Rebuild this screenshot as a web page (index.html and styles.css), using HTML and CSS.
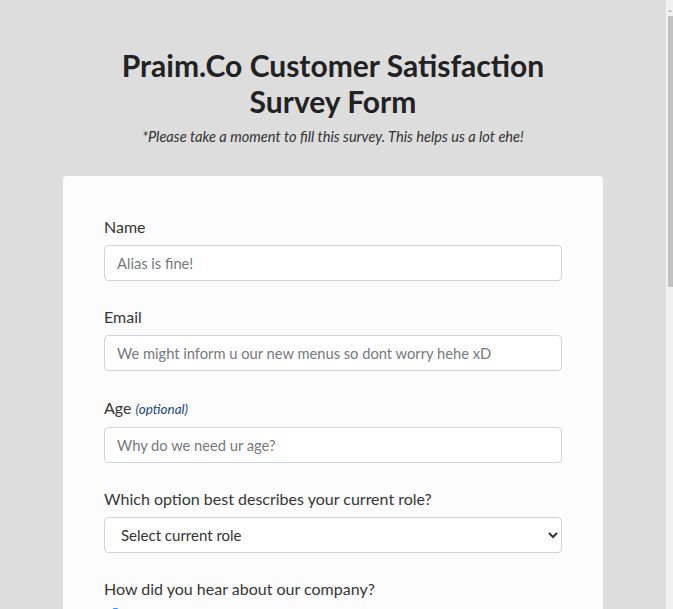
FILE: index.html
```html
<!DOCTYPE html>
<html lang="en">
<head>
<meta charset="utf-8">
<title>Praim.Co Customer Satisfaction Survey Form</title>
<link rel="stylesheet" href="styles.css">
</head>
<body>
<main class="page">
  <header class="header">
    <h1 class="title">Praim.Co Customer Satisfaction Survey Form</h1>
    <p class="subtitle">*Please take a moment to fill this survey. This helps us a lot ehe!</p>
  </header>
  <form class="card">
    <div class="group">
      <label class="label" for="name">Name</label>
      <input class="control" id="name" type="text" placeholder="Alias is fine!">
    </div>
    <div class="group">
      <label class="label" for="email">Email</label>
      <input class="control" id="email" type="email" placeholder="We might inform u our new menus so dont worry hehe xD">
    </div>
    <div class="group">
      <label class="label" for="age">Age <span class="optional">(optional)</span></label>
      <input class="control" id="age" type="number" placeholder="Why do we need ur age?">
    </div>
    <div class="group">
      <label class="label" for="role">Which option best describes your current role?</label>
      <select class="control select" id="role">
        <option>Select current role</option>
        <option>Student</option>
        <option>Full Time Job</option>
        <option>Full Time Learner</option>
        <option>Prefer not to say</option>
        <option>Other</option>
      </select>
    </div>
    <div class="group">
      <p class="label label-list">How did you hear about our company?</p>
      <label class="choice"><input type="radio" name="hear" checked> Friends</label>
      <label class="choice"><input type="radio" name="hear"> Social Media</label>
      <label class="choice"><input type="radio" name="hear"> Advertisement</label>
      <label class="choice"><input type="radio" name="hear"> Others</label>
    </div>
    <div class="group">
      <p class="label">Would you recommend our company to a friend?</p>
      <select class="control select">
        <option>Select an option</option>
        <option>Definitely</option>
        <option>Maybe</option>
        <option>Not sure</option>
      </select>
    </div>
    <div class="group">
      <p class="label label-list">What would you like us to improve? <span class="optional">(check all that apply)</span></p>
      <label class="choice"><input type="checkbox"> Menus</label>
      <label class="choice"><input type="checkbox"> Service</label>
      <label class="choice"><input type="checkbox"> Prices</label>
      <label class="choice"><input type="checkbox"> Ambience</label>
      <label class="choice"><input type="checkbox"> Cleanliness</label>
    </div>
    <div class="group">
      <label class="label" for="comments">Any comments or suggestions?</label>
      <textarea class="control area" id="comments" placeholder="Enter your comment here..."></textarea>
    </div>
    <div class="group">
      <button class="submit" type="submit">Submit</button>
    </div>
  </form>
</main>
<div class="scrollbar" aria-hidden="true">
  <span class="scroll-arrow"></span>
  <span class="scroll-thumb"></span>
</div>
</body>
</html>
```

FILE: styles.css
```css
html {
  background: #dddddd;
}
body {
  margin: 0;
  font-family: Lato, "Open Sans", sans-serif;
  color: #333333;
}
.page {
  display: flex;
  flex-direction: column;
  align-items: center;
  margin-right: 7px;
  padding: 47px 0 40px;
}
.scrollbar {
  position: fixed;
  top: 0;
  right: 0;
  width: 7px;
  height: 100vh;
  background: #f1f1f1;
  display: flex;
  flex-direction: column;
  align-items: flex-end;
}
.scroll-arrow {
  width: 0;
  height: 0;
  margin: 10px 1px 4px 0;
  border-left: 2px solid transparent;
  border-right: 2px solid transparent;
  border-bottom: 2px solid #a3a3a3;
}
.scroll-thumb {
  width: 5px;
  height: 271px;
  background: #c1c1c1;
}
.header {
  text-align: center;
  width: 460px;
}
.title {
  margin: 0;
  font-size: 30px;
  line-height: 36px;
  font-weight: 700;
  color: #222222;
}
.subtitle {
  margin: 9px 0 0;
  font-size: 14.6px;
  font-style: italic;
  color: #333333;
  white-space: nowrap;
}
.card {
  width: 540px;
  box-sizing: border-box;
  margin-top: 31px;
  padding: 39px 41px 30px;
  background: #fcfcfc;
  border-radius: 4px;
}
.group {
  display: flex;
  flex-direction: column;
  margin-bottom: 24.25px;
}
.label {
  display: block;
  margin: 0 0 6px;
  font-size: 16px;
  line-height: 24px;
  color: #363636;
}
.label-list {
  margin-bottom: 3px;
}
.optional {
  font-size: 13.5px;
  font-style: italic;
  color: #22457c;
}
.control {
  box-sizing: border-box;
  width: 100%;
  height: 36px;
  margin: 0;
  padding: 0 12px;
  font-family: Lato, sans-serif;
  font-size: 14.7px;
  color: #333333;
  background: #ffffff;
  border: 1px solid #ced4da;
  border-radius: 4px;
}
.control::placeholder {
  color: #76797c;
}
.select {
  font-size: 15px;
  padding-left: 12px;
}
.area {
  height: 120px;
  padding: 8px 12px;
  resize: vertical;
}
.choice {
  display: flex;
  align-items: center;
  gap: 8px;
  font-size: 16px;
  line-height: 20px;
  margin-bottom: 6px;
}
.choice input {
  margin: 0 0 0 5px;
  width: 13px;
  height: 13px;
}
.submit {
  height: 40px;
  font-family: Lato, sans-serif;
  font-size: 16px;
  color: #ffffff;
  background: #37af65;
  border: 0;
  border-radius: 4px;
}
```
